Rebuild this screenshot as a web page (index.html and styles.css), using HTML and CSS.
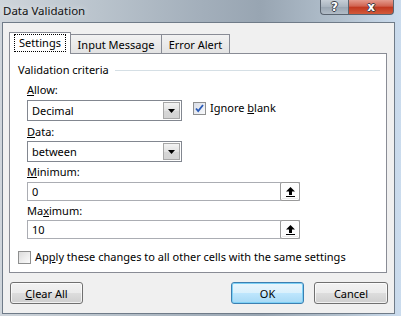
FILE: index.html
```html
<!DOCTYPE html>
<html lang="en">
<head>
  <meta charset="UTF-8">
  <title>Data Validation</title>
  <link rel="stylesheet" href="styles.css">
</head>
<body>
  <div class="window">
    <div class="titlebar">
      <span class="title">Data Validation</span>
      <div class="controls">
        <span class="ctl help">?</span>
        <span class="ctl close">x</span>
      </div>
    </div>

    <div class="client">
      <div class="tabs">
        <div class="tab active"><span class="focus">Settings</span></div>
        <div class="tab tab-input">Input Message</div>
        <div class="tab tab-error">Error Alert</div>
      </div>

      <div class="panel">
        <div class="group-head">
          <span>Validation criteria</span>
          <span class="rule"></span>
        </div>

        <div class="fields">
          <div class="label first"><u>A</u>llow:</div>
          <div class="row">
            <div class="combo">
              <span class="combo-text">Decimal</span>
              <span class="drop"><svg width="7" height="4" viewBox="0 0 7 4"><path d="M0 0h7L3.5 4z" fill="#000"/></svg></span>
            </div>
            <label class="check">
              <span class="box checked">
                <svg width="9" height="9" viewBox="0 0 9 9"><path d="M1 4.5l2.2 2.6L8 1" fill="none" stroke="#2a5bb8" stroke-width="1.8"/></svg>
              </span>
              <span>Ignore <u>b</u>lank</span>
            </label>
          </div>

          <div class="label"><u>D</u>ata:</div>
          <div class="combo second">
            <span class="combo-text">between</span>
            <span class="drop"><svg width="7" height="4" viewBox="0 0 7 4"><path d="M0 0h7L3.5 4z" fill="#000"/></svg></span>
          </div>

          <div class="label third"><u>M</u>inimum:</div>
          <div class="ref-input">
            <span class="ref-text">0</span>
            <span class="ref-btn"><svg width="9" height="10" viewBox="0 0 9 10"><path d="M4.5 0L9 4.5H6V8H3V4.5H0z" fill="#000"/><rect x="0" y="9" width="9" height="1" fill="#000"/></svg></span>
          </div>

          <div class="label fourth">Ma<u>x</u>imum:</div>
          <div class="ref-input max">
            <span class="ref-text">10</span>
            <span class="ref-btn"><svg width="9" height="10" viewBox="0 0 9 10"><path d="M4.5 0L9 4.5H6V8H3V4.5H0z" fill="#000"/><rect x="0" y="9" width="9" height="1" fill="#000"/></svg></span>
          </div>
        </div>

        <label class="check apply">
          <span class="box"></span>
          <span>Ap<u>p</u>ly these changes to all other cells with the same settings</span>
        </label>
      </div>

      <div class="buttons">
        <button class="btn"><u>C</u>lear All</button>
        <button class="btn default ok">OK</button>
        <button class="btn cancel">Cancel</button>
      </div>
    </div>
  </div>
</body>
</html>
```

FILE: styles.css
```css
* {
  box-sizing: border-box;
}
body {
  margin: 0;
  font-family: 'Noto Sans', 'Open Sans', sans-serif;
  font-size: 11px;
  color: #000;
}
.window {
  width: 401px;
  height: 316px;
  display: flex;
  flex-direction: column;
  background: linear-gradient(to right, #cfd5db 0%, #b9c3cc 25%, #a3afbb 50%, #98a5b2 65%, #b3c1ce 85%, #cbdcee 100%);
}
.titlebar {
  height: 22px;
  display: flex;
  align-items: flex-start;
}
.title {
  margin: 3px 0 0 3px;
  line-height: 16px;
  font-size: 11.5px;
  color: #111;
  text-shadow: 0 0 6px rgba(255, 255, 255, 0.8);
}
.controls {
  margin-left: auto;
  margin-right: 7px;
  display: flex;
}
.ctl {
  height: 15px;
  display: flex;
  align-items: center;
  justify-content: center;
  font-family: 'DejaVu Sans', sans-serif;
  font-weight: bold;
  font-size: 12px;
  color: #fff;
  border: 1px solid #5a6470;
  border-top: none;
  text-shadow: -1px 0 #3a3f48, 1px 0 #3a3f48, 0 -1px #3a3f48, 0 1px #3a3f48;
}
.help {
  width: 28px;
  border-right: none;
  border-bottom-left-radius: 4px;
  background: linear-gradient(#c6ced6, #a9b4bf 50%, #9aa6b2 51%, #b2bcc7);
}
.close {
  width: 46px;
  border-bottom-right-radius: 4px;
  background: linear-gradient(#e49a8d, #d0624f 45%, #c1371f 50%, #d25a3b);
}
.client {
  flex: 1;
  margin: 0 6px 2px 2px;
  border: 1px solid #6f7b88;
  background: #f0f0f0;
  padding: 9px 0 0 6px;
}
.tabs {
  display: flex;
  align-items: flex-end;
  height: 21px;
}
.tab {
  height: 19px;
  border: 1px solid #898c95;
  border-bottom: none;
  background: linear-gradient(#f2f2f2, #e3e3e3);
  display: flex;
  align-items: center;
  justify-content: center;
  line-height: 15px;
}
.tab.active {
  position: relative;
  z-index: 1;
  width: 62px;
  height: 22px;
  margin-bottom: -1px;
  padding-bottom: 2px;
  background: #fff;
}
.focus {
  border: 1px dotted #000;
  padding: 0 4px 1px;
}
.tab-input {
  width: 91px;
  border-left: none;
}
.tab-error {
  width: 68px;
  border-left: none;
}
.panel {
  width: 378px;
  height: 220px;
  background: #fff;
  border: 1px solid #898c95;
  padding: 8px 6px 0 8px;
}
.group-head {
  display: flex;
  align-items: center;
  line-height: 16px;
}
.rule {
  flex: 1;
  height: 1px;
  margin: 0 0 0 6px;
  background: #d5dfe5;
}
.fields {
  padding-left: 9px;
}
.label {
  line-height: 16px;
  margin-top: 3px;
}
.label.first {
  margin-top: 4px;
}
.label.third,
.label.fourth {
  margin-top: 2px;
}
.row {
  display: flex;
  align-items: flex-start;
  margin-top: 2px;
}
.combo {
  width: 155px;
  height: 21px;
  border: 1px solid #828790;
  display: flex;
  align-items: stretch;
  background: #fff;
}
.combo.second {
  margin-top: 1px;
}
.combo-text {
  flex: 1;
  padding-left: 4px;
  line-height: 19px;
}
.drop {
  width: 17px;
  margin: 1px;
  border: 1px solid #a7a7a7;
  background: linear-gradient(#f3f3f3, #e2e2e2 50%, #d6d6d6 51%, #d3d3d3);
  display: flex;
  align-items: center;
  justify-content: center;
}
.check {
  display: flex;
  align-items: center;
  line-height: 16px;
}
.row .check {
  margin: 0 0 0 11px;
}
.box {
  width: 13px;
  height: 13px;
  border: 1px solid #8e8f8f;
  background: linear-gradient(135deg, #dcdcdc, #fbfbfb);
  margin-right: 4px;
  display: flex;
  align-items: center;
  justify-content: center;
}
.box.checked {
  background: linear-gradient(135deg, #d9dde6, #f8f9fb);
}
.ref-input {
  width: 273px;
  height: 19px;
  margin-top: 2px;
  border: 1px solid #abadb3;
  display: flex;
  align-items: stretch;
  background: #fff;
}
.ref-input.max {
  margin-top: 1px;
}
.ref-text {
  flex: 1;
  padding-left: 4px;
  line-height: 17px;
}
.ref-btn {
  width: 20px;
  border: 1px solid #9a9a9a;
  border-radius: 2px;
  margin: -1px -1px -1px 0;
  background: #fdfdfd;
  box-shadow: inset 0 0 0 1px #fff, inset 0 -2px 0 #ececec;
  display: flex;
  align-items: center;
  justify-content: center;
}
.apply {
  margin-top: 10px;
}
.buttons {
  display: flex;
  margin-top: 9px;
  padding-left: 1px;
}
.btn {
  width: 73px;
  height: 22px;
  padding: 0;
  font-family: inherit;
  font-size: 11px;
  color: #000;
  border: 1px solid #707070;
  border-radius: 3px;
  background: linear-gradient(#f2f2f2, #ebebeb 50%, #dddddd 51%, #cfcfcf);
  box-shadow: inset 0 0 0 1px rgba(255, 255, 255, 0.7);
}
.btn.default {
  border-color: #3c7fb1;
  background: linear-gradient(#eaf6fd, #d9f0fc 50%, #bee6fd 51%, #a7d9f5);
  box-shadow: inset 0 0 0 1px #7ed1f6;
}
.ok {
  margin-left: auto;
}
.cancel {
  width: 74px;
  margin: 0 6px 0 10px;
}
```
